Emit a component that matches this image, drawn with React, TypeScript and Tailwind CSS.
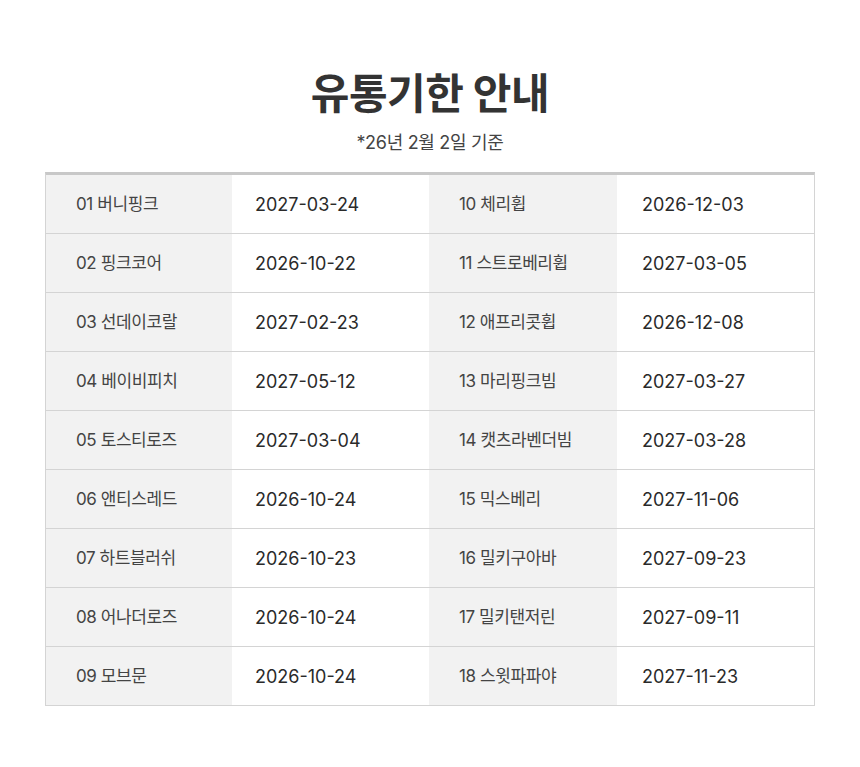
import React from "react";

const rows: [string, string, string, string][] = [
  ["01 버니핑크", "2027-03-24", "10 체리휩", "2026-12-03"],
  ["02 핑크코어", "2026-10-22", "11 스트로베리휩", "2027-03-05"],
  ["03 선데이코랄", "2027-02-23", "12 애프리콧휩", "2026-12-08"],
  ["04 베이비피치", "2027-05-12", "13 마리핑크빔", "2027-03-27"],
  ["05 토스티로즈", "2027-03-04", "14 캣츠라벤더빔", "2027-03-28"],
  ["06 앤티스레드", "2026-10-24", "15 믹스베리", "2027-11-06"],
  ["07 하트블러쉬", "2026-10-23", "16 밀키구아바", "2027-09-23"],
  ["08 어나더로즈", "2026-10-24", "17 밀키탠저린", "2027-09-11"],
  ["09 모브문", "2026-10-24", "18 스윗파파야", "2027-11-23"],
];

function Label({ text }: { text: string }) {
  return (
    <div className="flex h-[58px] items-center bg-[#f2f2f2] pl-[30px] pt-[1px] text-[17px] text-[#444] tracking-[-0.4px]">
      {text}
    </div>
  );
}

function DateCell({ text }: { text: string }) {
  return (
    <div className="flex h-[58px] items-center bg-white pl-[23px] text-[18px] font-normal text-[#2a2a2a]">
      {text}
    </div>
  );
}

export default function App() {
  return (
    <div
      className="min-h-[767px] w-full bg-white"
      style={{ fontFamily: 'Inter, "Noto Sans CJK KR", "Noto Sans", sans-serif' }}
    >
      <div className="flex flex-col items-center pt-[66px]">
        <h1 className="text-[42px] font-bold leading-[56px] tracking-[-0.5px] text-[#333]">
          유통기한 안내
        </h1>
        <p className="mt-[9px] text-[18px] leading-[24px] tracking-[-0.3px] text-[#444]">
          *26년 2월 2일 기준
        </p>
      </div>
      <div className="mx-auto mt-[17px] w-[770px] border-x border-b border-t-[3px] border-x-[#d4d4d4] border-b-[#d4d4d4] border-t-[#c8c8c8]">
        {rows.map((r, i) => (
          <div
            key={i}
            className={`grid grid-cols-[186px_197px_188px_197px] ${
              i < rows.length - 1 ? "border-b border-[#d4d4d4]" : ""
            }`}
          >
            <Label text={r[0]} />
            <DateCell text={r[1]} />
            <Label text={r[2]} />
            <div className="pl-[2px]">
              <DateCell text={r[3]} />
            </div>
          </div>
        ))}
      </div>
    </div>
  );
}
